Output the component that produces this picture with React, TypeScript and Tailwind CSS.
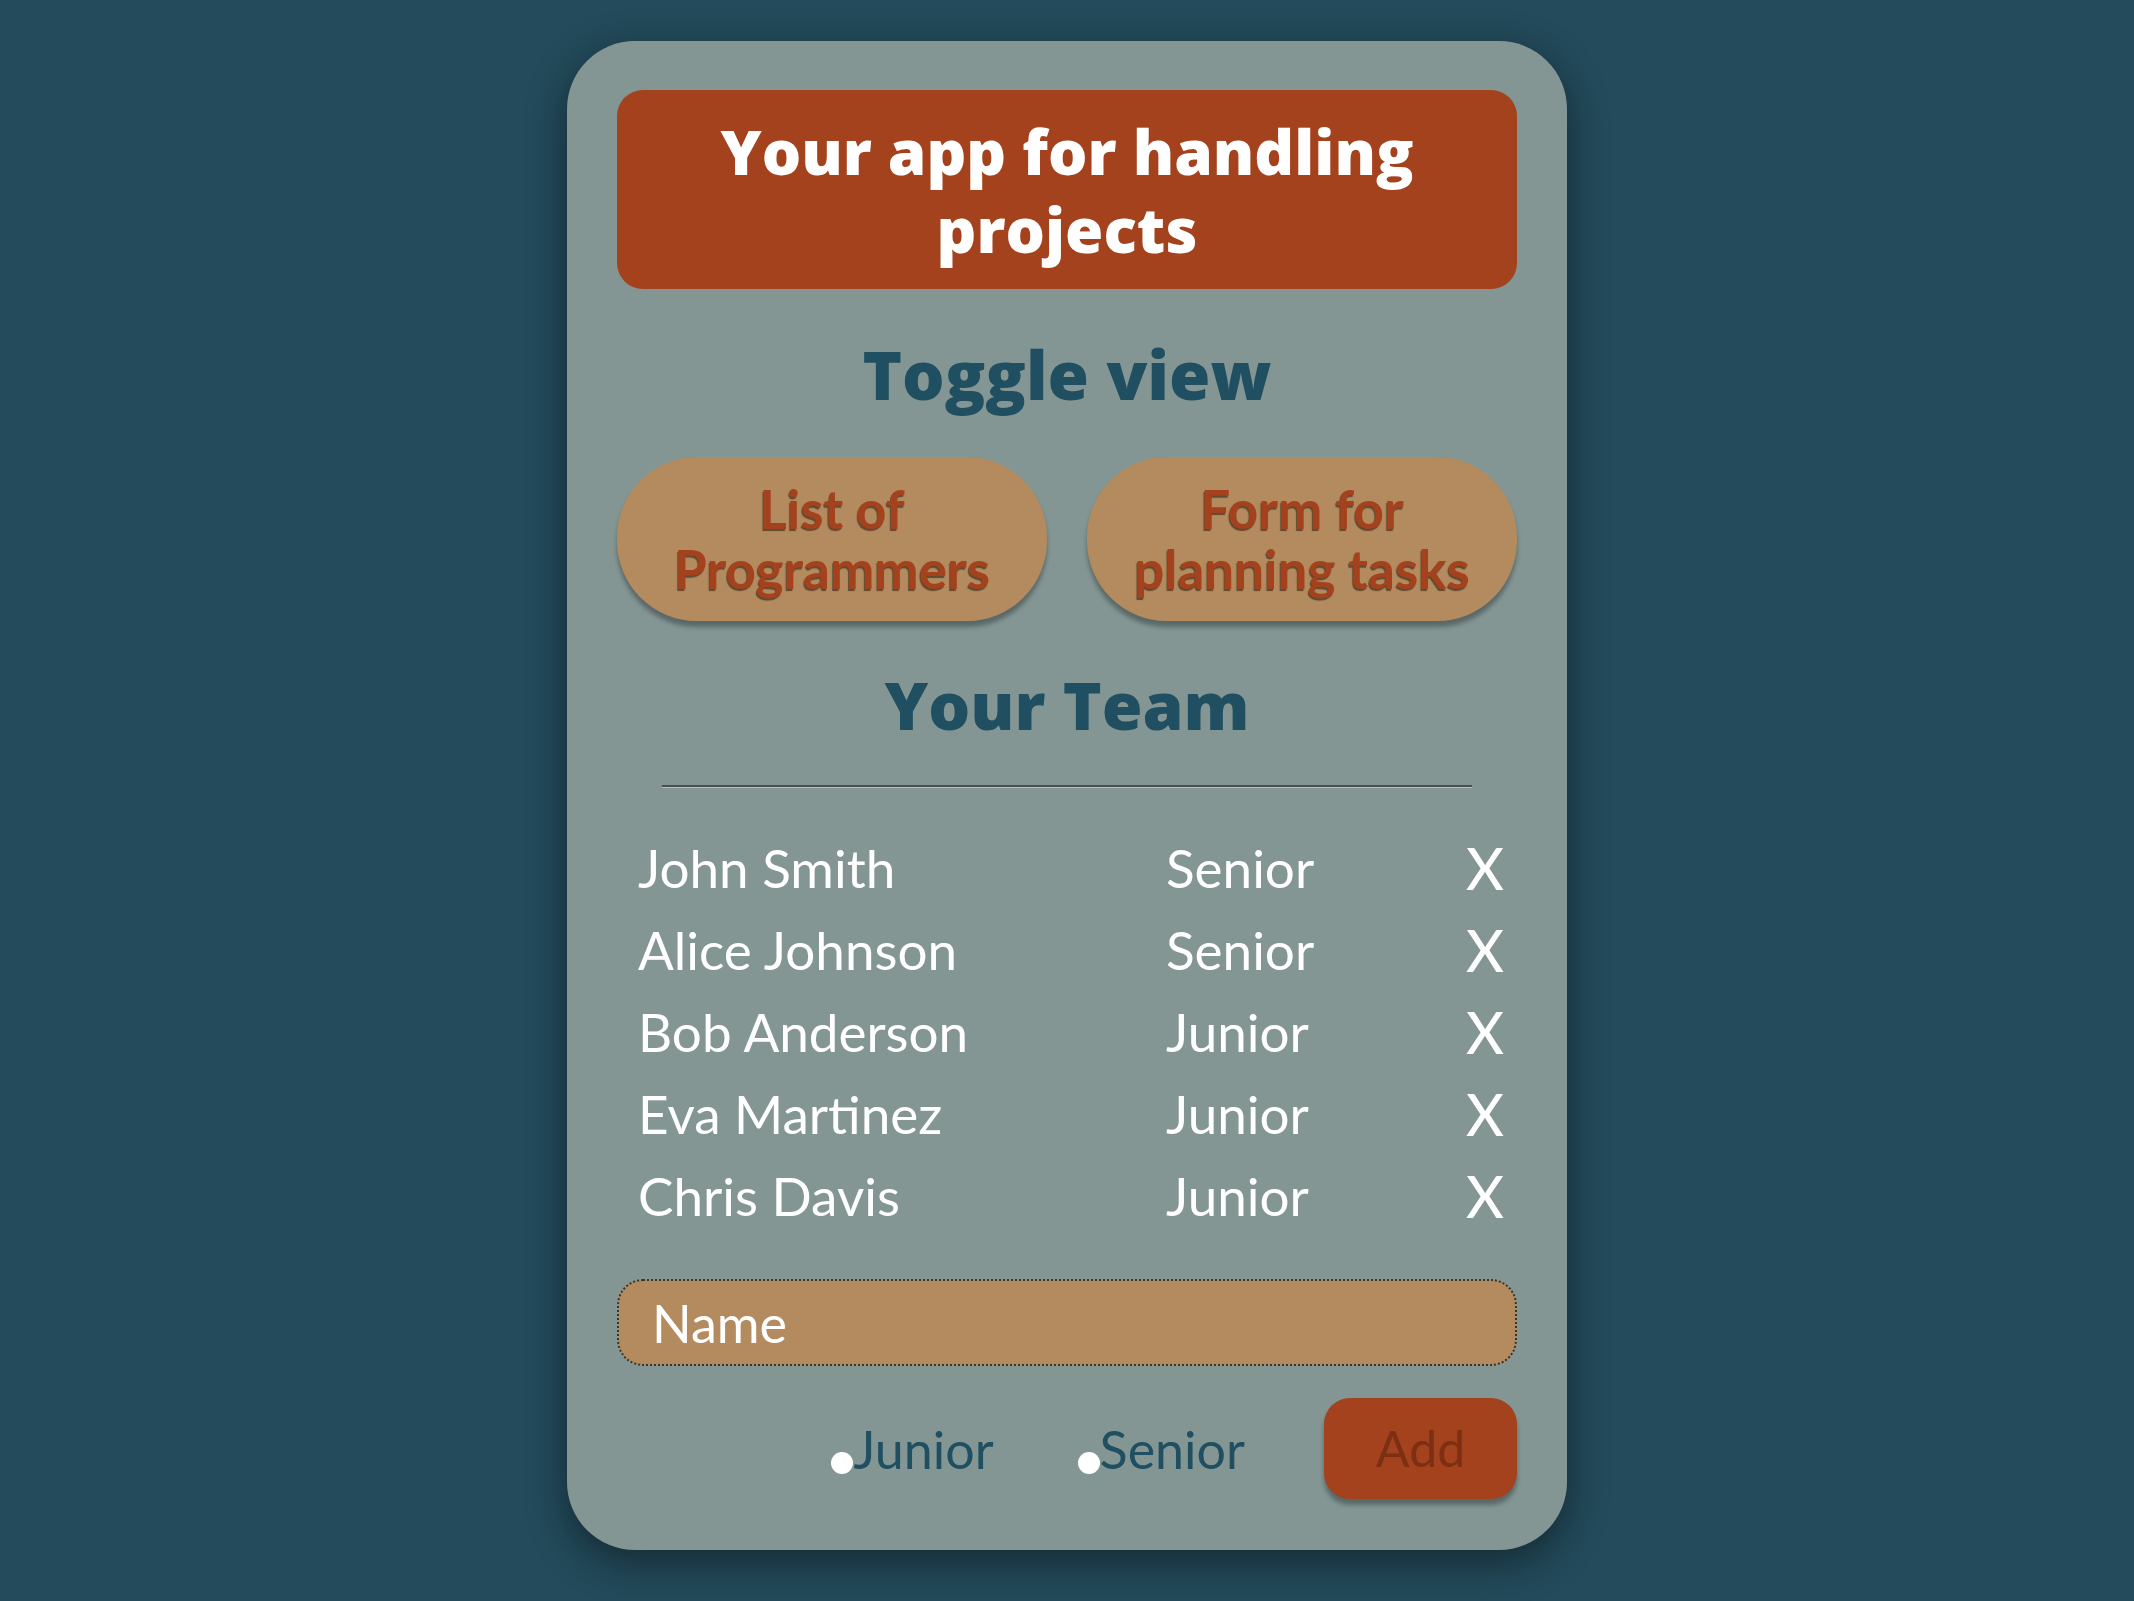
import React from "react";

const team = [
  { name: "John Smith", level: "Senior" },
  { name: "Alice Johnson", level: "Senior" },
  { name: "Bob Anderson", level: "Junior" },
  { name: "Eva Martinez", level: "Junior" },
  { name: "Chris Davis", level: "Junior" },
];

export default function App() {
  return (
    <div className="min-h-screen w-full bg-[#234b5b] pt-[41px] pb-[49px] font-['Lato',sans-serif]">
      <div className="mx-auto flex w-[1000px] flex-col rounded-[68px] bg-[#839694] px-[50px] pt-[49px] pb-[51px] shadow-[0_12px_40px_rgba(0,0,0,0.45)]">
        {/* Header */}
        <header className="flex h-[199px] items-center justify-center rounded-[26px] bg-[#a3421d] px-10">
          <h1 className="text-center font-['Open_Sans',sans-serif] text-[62px] font-extrabold leading-[78px] text-white">
            Your app for handling projects
          </h1>
        </header>

        {/* Toggle */}
        <h2 className="mt-[45px] h-[80px] text-center font-['Open_Sans',sans-serif] text-[67px] font-extrabold leading-[80px] text-[#1f4f61]">
          Toggle view
        </h2>
        <div className="mt-[43px] grid grid-cols-2 gap-[40px]">
          <button className="h-[164px] rounded-[80px] bg-[#b38b5f] px-6 text-[53px] font-bold leading-[60px] text-[#a3421d] shadow-[0_6px_4px_rgba(40,50,50,0.45)] [text-shadow:-1px_2px_1px_rgba(40,30,20,0.6)]">
            List of Programmers
          </button>
          <button className="h-[164px] rounded-[80px] bg-[#b38b5f] px-6 text-[53px] font-bold leading-[60px] text-[#a3421d] shadow-[0_6px_4px_rgba(40,50,50,0.45)] [text-shadow:-1px_2px_1px_rgba(40,30,20,0.6)]">
            Form for planning tasks
          </button>
        </div>

        {/* Team */}
        <h2 className="mt-[43px] h-[80px] text-center font-['Open_Sans',sans-serif] text-[66px] font-extrabold leading-[80px] text-[#1f4f61]">
          Your Team
        </h2>
        <div className="mx-auto mt-[41px] w-[810px] border-t-2 border-b border-t-[#4b4f4f] border-b-[#b5bfbd]" />

        <ul className="mt-[39px] flex flex-col">
          {team.map((p) => (
            <li key={p.name} className="flex h-[82px] items-center pl-[21px] text-[53px] text-white">
              <span className="w-[528px]">{p.name}</span>
              <span className="w-[300px]">{p.level}</span>
              <button className="text-[58px] font-medium leading-none text-white">X</button>
            </li>
          ))}
        </ul>

        {/* Form */}
        <div className="mt-[42px] flex h-[87px] items-center rounded-[26px] border-2 border-dotted border-[#263a3e] bg-[#b38b5f] px-[33px]">
          <span className="text-[52px] leading-none text-white">Name</span>
        </div>
        <div className="mt-[32px] flex items-center justify-end">
          <label className="flex items-end text-[52px] leading-none text-[#1f4f61]">
            <span className="mb-[1px] h-[22px] w-[22px] rounded-full bg-white" />
            Junior
          </label>
          <label className="ml-[84px] flex items-end text-[52px] leading-none text-[#1f4f61]">
            <span className="mb-[1px] h-[22px] w-[22px] rounded-full bg-white" />
            Senior
          </label>
          <button className="ml-[79px] h-[101px] w-[193px] rounded-[26px] bg-[#a3421d] text-[50px] text-[#7c2f13] shadow-[0_6px_4px_rgba(40,50,50,0.45)]">
            Add
          </button>
        </div>
      </div>
    </div>
  );
}
